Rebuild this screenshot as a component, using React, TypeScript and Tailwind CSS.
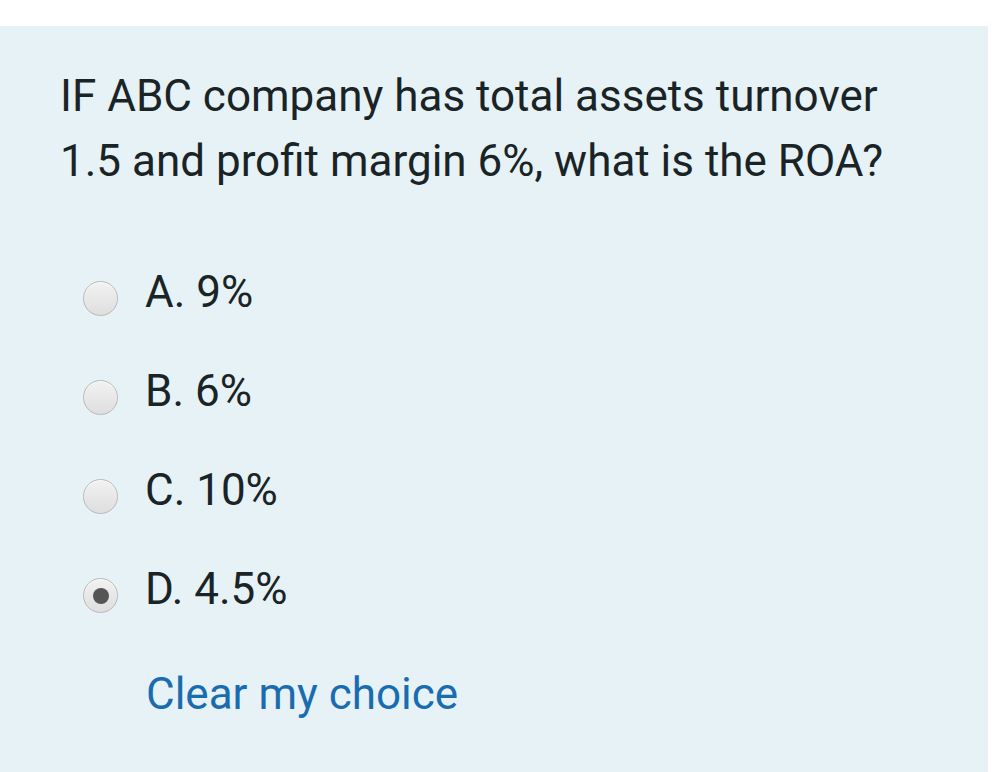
import { useState } from "react";

const options = ["A. 9%", "B. 6%", "C. 10%", "D. 4.5%"];

function Radio({ checked }: { checked: boolean }) {
  return (
    <span className="relative flex h-[35px] w-[35px] shrink-0 items-center justify-center rounded-full border border-[#b9b9b9] bg-gradient-to-b from-[#f2f2f2] to-[#dedede] shadow-[inset_0_1px_1px_rgba(255,255,255,0.8)]">
      {checked && <span className="h-[16px] w-[16px] rounded-full bg-[#555555]" />}
    </span>
  );
}

export default function App() {
  const [selected, setSelected] = useState<number | null>(3);

  return (
    <div className="min-h-screen bg-white pt-[26px] font-['Roboto',sans-serif]">
      <div className="mr-[6px] min-h-[746px] bg-[#e6f2f5] pl-[60px] pt-[38px] text-[#1a2427]">
        <p className="w-[860px] text-[44px] leading-[65px]">
          IF ABC company has total assets turnover 1.5 and profit margin 6%, what is the ROA?
        </p>

        {/* answers */}
        <div className="mt-[87px] flex flex-col gap-[64px] pl-[23px]">
          {options.map((opt, i) => (
            <label
              key={opt}
              className="flex h-[35px] cursor-pointer items-center gap-[27px]"
              onClick={() => setSelected(i)}
            >
              <Radio checked={selected === i} />
              <span className="-mt-[14px] text-[44px] leading-none">{opt}</span>
            </label>
          ))}
        </div>

        <button
          className="ml-[86px] mt-[59px] text-[44px] leading-none text-[#1a6cb0]"
          onClick={() => setSelected(null)}
        >
          Clear my choice
        </button>
      </div>
    </div>
  );
}
